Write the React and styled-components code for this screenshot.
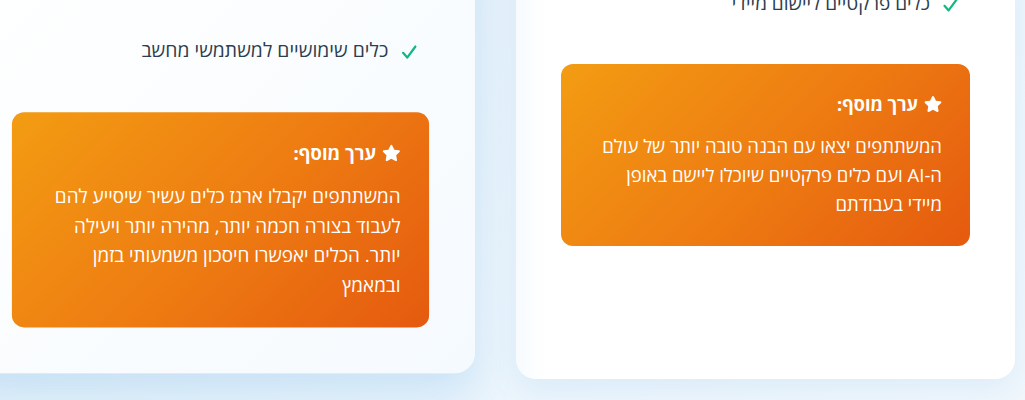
import React from "react";
import styled, { createGlobalStyle } from "styled-components";
import { FaStar } from "react-icons/fa";

const GlobalStyle = createGlobalStyle`
  body {
    margin: 0;
    background: linear-gradient(135deg, #e2eff9 0%, #ecf5fc 60%, #f1f7fc 100%);
    font-family: "Open Sans", "DejaVu Sans", sans-serif;
  }
`;

const Page = styled.div`
  height: 400px;
  overflow: hidden;
`;

const CardsRow = styled.div`
  display: flex;
  direction: rtl;
  gap: 46px;
  padding-right: 10px;
  margin-top: -55px;
  align-items: stretch;
`;

const Card = styled.div`
  flex: 0 0 499px;
  box-sizing: border-box;
  padding: 45px;
  border-radius: 20px;
  background: ${(p) =>
    p.$active
      ? "linear-gradient(135deg, #ffffff 0%, #f5fafe 100%)"
      : "linear-gradient(90deg, #f7fbfe 0%, #ffffff 6%, #ffffff 100%)"};
  box-shadow: ${(p) =>
    p.$active
      ? "0 20px 40px rgba(52, 152, 219, 0.18)"
      : "0 10px 30px rgba(52, 152, 219, 0.1)"};
  transform: ${(p) => (p.$active ? "translateY(-10px) scale(1.02)" : "none")};
`;

const CheckList = styled.ul`
  list-style: none;
  margin: ${(p) => p.$lead || 0}px 0 0;
  padding: 0;
`;

const CheckItem = styled.li`
  display: flex;
  align-items: center;
  gap: 13px;
  padding: 0 12px;
  font-size: 19px;
  line-height: 26px;
  color: #2c3e50;
`;

const Tick = styled.svg`
  flex: 0 0 15px;
  width: 15px;
  height: 14px;
  margin-top: 4px;
`;

const ValueBox = styled.div`
  margin-top: 48px;
  padding: 28px;
  border-radius: 12px;
  background: linear-gradient(135deg, #f39c12 0%, #ee7d12 50%, #e55a0f 100%);
  color: #ffffff;
`;

const ValueTitle = styled.div`
  display: flex;
  align-items: center;
  gap: 6px;
  font-size: 18px;
  font-weight: 700;
  line-height: 24px;
  margin-bottom: 15px;

  svg {
    width: 18px;
    height: 18px;
  }
`;

const ValueText = styled.p`
  margin: 0;
  font-size: 18.5px;
  line-height: 29px;
`;

const NoWrap = styled.span`
  white-space: nowrap;
`;

const cards = [
  {
    item: "כלים פרקטיים ליישום מיידי",
    text: (
      <>
        המשתתפים יצאו עם הבנה טובה יותר של עולם <NoWrap>ה-AI</NoWrap> ועם
        כלים פרקטיים שיוכלו ליישם באופן מיידי בעבודתם
      </>
    ),
    lead: 0,
    active: false,
  },
  {
    item: "כלים שימושיים למשתמשי מחשב",
    text: "המשתתפים יקבלו ארגז כלים עשיר שיסייע להם לעבוד בצורה חכמה יותר, מהירה יותר ויעילה יותר. הכלים יאפשרו חיסכון משמעותי בזמן ובמאמץ",
    lead: 59,
    active: true,
  },
];

const CheckIcon = () => (
  <Tick viewBox="0 0 15 14" fill="none">
    <path
      d="M1.5 7.8 L5.6 12.4 L13.6 1.6"
      stroke="#10b981"
      strokeWidth="2.2"
      strokeLinecap="round"
      strokeLinejoin="round"
    />
  </Tick>
);

const App = () => {
  return (
    <Page>
      <GlobalStyle />
      <CardsRow>
        {cards.map((c) => (
          <Card key={c.item} $active={c.active}>
            <CheckList $lead={c.lead}>
              <CheckItem>
                <CheckIcon />
                <span>{c.item}</span>
              </CheckItem>
            </CheckList>
            <ValueBox>
              <ValueTitle>
                <FaStar />
                <span>ערך מוסף:</span>
              </ValueTitle>
              <ValueText>{c.text}</ValueText>
            </ValueBox>
          </Card>
        ))}
      </CardsRow>
    </Page>
  );
};

export default App;
